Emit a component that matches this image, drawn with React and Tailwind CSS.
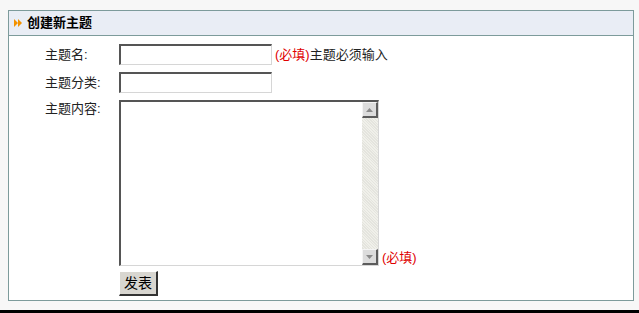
import React from "react";

const font = { fontFamily: '"Liberation Sans", "Noto Sans CJK SC", sans-serif' };

function Arrows() {
  return (
    <svg width="8" height="8" viewBox="0 0 8 8">
      <polygon points="0,0 4,4 0,8" fill="#f39200" />
      <polygon points="4,0 8,4 4,8" fill="#f39200" />
    </svg>
  );
}

function ScrollButton({ down }) {
  return (
    <div className="h-[16px] w-[16px] bg-[#dcdcdc] border-t border-l border-t-[#f4f4f4] border-l-[#f4f4f4] border-b-2 border-r-2 border-b-[#5c5c5c] border-r-[#5c5c5c] flex items-center justify-center">
      <svg width="7" height="4" viewBox="0 0 7 4">
        {down ? (
          <polygon points="0,0 7,0 3.5,4" fill="#8a8a8a" />
        ) : (
          <polygon points="0,4 7,4 3.5,0" fill="#8a8a8a" />
        )}
      </svg>
    </div>
  );
}

function Field({ width }) {
  return (
    <input
      type="text"
      className={`${width} h-[21px] bg-white border-t-2 border-l-2 border-t-[#555] border-l-[#555] border-b border-r border-b-[#d6d6d6] border-r-[#d6d6d6] outline-none`}
    />
  );
}

export default function App() {
  return (
    <div
      className="w-[639px] h-[313px] bg-[#f7f7f7] pt-[10px] pl-[8px] border-b-[3px] border-black"
      style={font}
    >
      <div className="w-[626px] h-[291px] border border-[#7d9b9b] bg-white flex flex-col">
        <div className="h-[25px] bg-[#e9edf5] border-b border-[#7d9b9b] flex items-center pl-[5px] gap-[5px]">
          <Arrows />
          <span className="text-[13px] font-bold text-black">创建新主题</span>
        </div>
        <div className="pt-[8px] pl-[36px] text-[13px] text-[#222] flex flex-col">
          <div className="flex items-center h-[21px]">
            <label className="w-[74px]">主题名:</label>
            <Field width="w-[153px]" />
            <span className="ml-[3px]">
              <span className="text-[#e00000]">(必填)</span>主题必须输入
            </span>
          </div>
          <div className="flex items-center h-[21px] mt-[7px]">
            <label className="w-[74px]">主题分类:</label>
            <Field width="w-[153px]" />
          </div>
          <div className="flex mt-[7px]">
            <label className="w-[74px] leading-[16px] pt-[1px]">主题内容:</label>
            <div className="w-[260px] h-[166px] flex border-t-2 border-l-2 border-t-[#555] border-l-[#555] border-b border-r border-b-[#d6d6d6] border-r-[#d6d6d6]">
              <textarea className="flex-1 resize-none outline-none bg-white" />
              <div className="w-[16px] flex flex-col bg-[repeating-linear-gradient(45deg,#e4e4de_0px,#e4e4de_1px,#f0f0ea_1px,#f0f0ea_2px)]">
                <ScrollButton />
                <div className="flex-1" />
                <ScrollButton down />
              </div>
            </div>
            <span className="self-end ml-[3px] text-[#e00000] leading-[16px]">(必填)</span>
          </div>
          <div className="mt-[5px] pl-[74px]">
            <button className="w-[39px] h-[25px] bg-[#d8d6d0] text-[14px] text-black border-t border-l border-t-white border-l-white border-b-2 border-r-2 border-b-[#333] border-r-[#333]">
              发表
            </button>
          </div>
        </div>
      </div>
    </div>
  );
}
